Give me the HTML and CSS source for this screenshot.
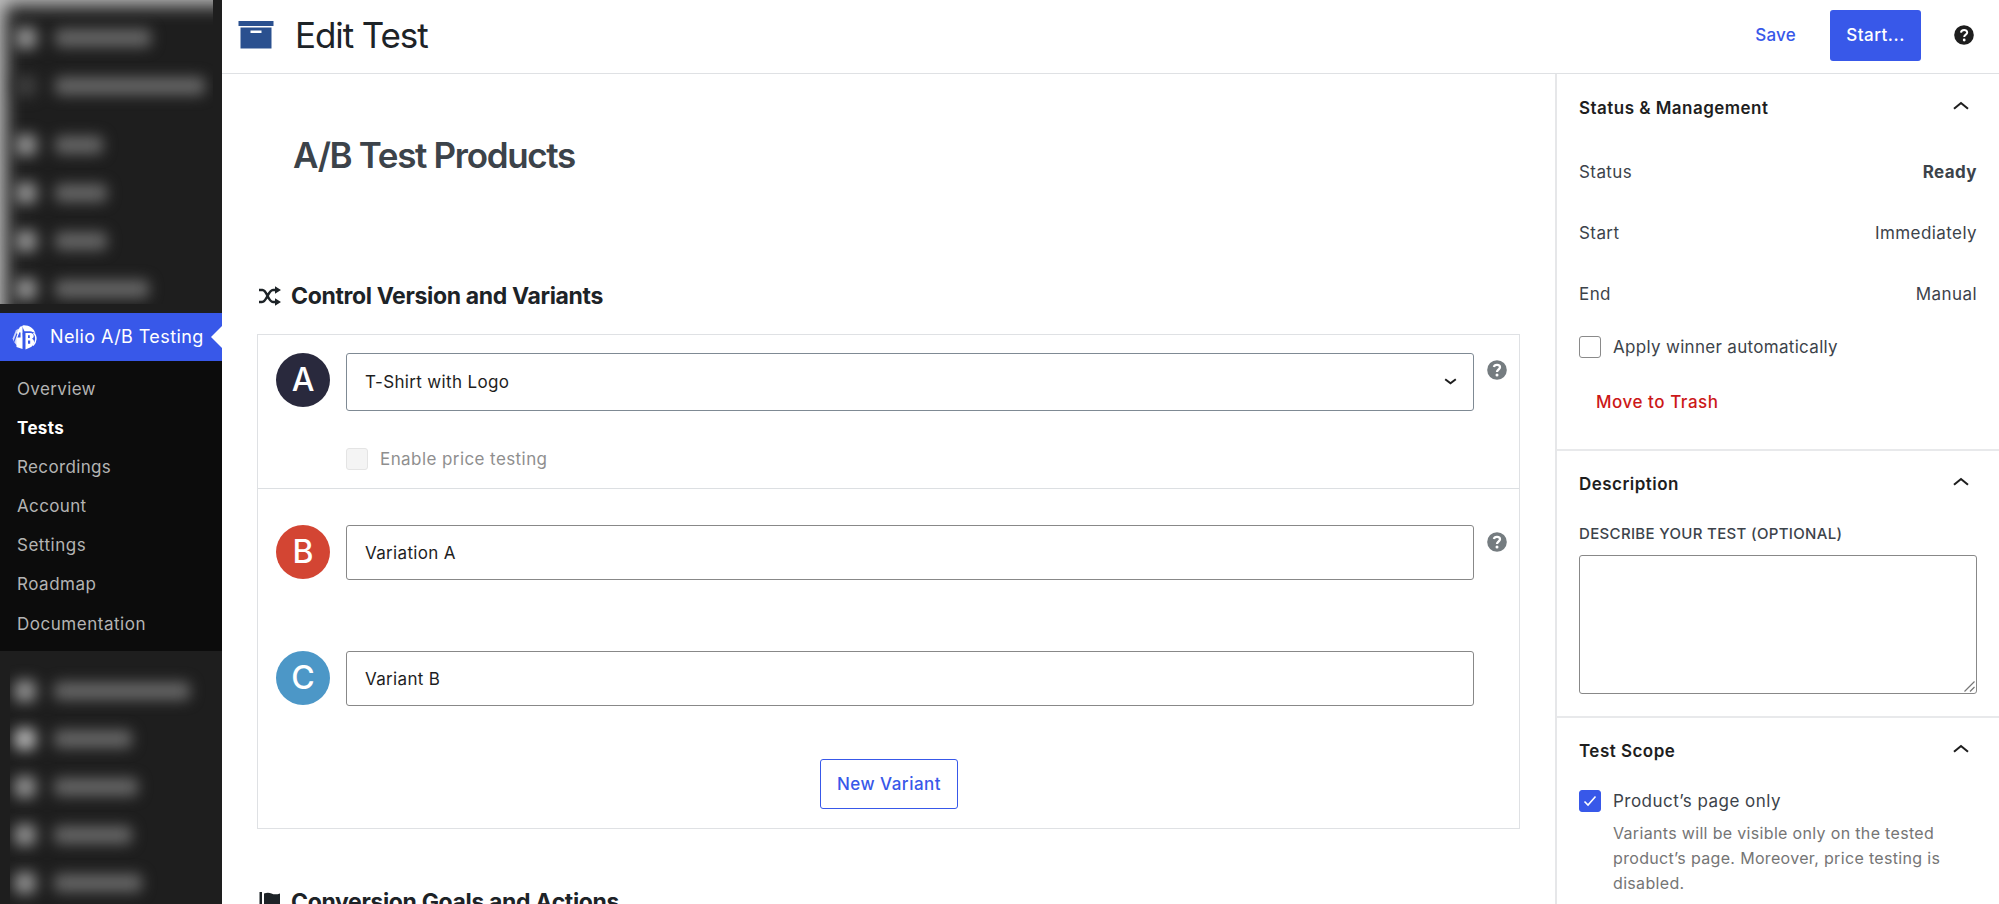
FILE: index.html
```html
<!DOCTYPE html>
<html lang="en">
<head>
<meta charset="utf-8">
<title>Edit Test</title>
<link rel="stylesheet" href="styles.css">
</head>
<body>
<div class="app">
  <nav class="menu">
    <div class="blurred top">
      <div class="haze"></div>
      <div class="ghost"><i></i><b style="width:96px"></b></div>
      <div class="ghost faint"><i></i><b style="width:150px"></b></div>
      <div class="ghost group"><i></i><b style="width:48px"></b></div>
      <div class="ghost"><i></i><b style="width:52px"></b></div>
      <div class="ghost"><i></i><b style="width:52px"></b></div>
      <div class="ghost"><i></i><b style="width:94px"></b></div>
    </div>
    <a class="current">
      <svg class="logo" width="25" height="25" viewBox="0 0 25 25"><g fill="#fff"><path d="M9.500 4.200L6.600 21.500C3.700 19.500 1.200 17 .6 13.500L3.800 5.500C5.200 4 7.500 3.300 9.500 4.200z" opacity=".75"/><path d="M4.500 9L8 1.800L10.500 1V24L4.500 22V14.500z"/><path d="M11 .4C17 0 22 3.500 23.500 8.500C21 6.500 19 6.300 12.500 6.300L10 1z"/><path d="M13.500 8H18.500C22.800 8.300 22.300 13 20 13.800C23.500 15.200 22.500 20.800 18 22.500L13.500 24.500z"/></g><path d="M21.500 8C25 11 24.500 17 21 20.500" fill="none" stroke="#fff" stroke-width="1.500"/><path d="M5 8.500L1.800 17M8 7.500V12H6.200zM11.200 8L12.400 24.500" fill="#3858e9" stroke="#3858e9" stroke-width="1.100"/><path d="M16 10.300H17.800V13H16zM16 15.500H18.200V18.700H16z" fill="#3858e9"/></svg>
      <span>Nelio A/B Testing</span>
    </a>
    <div class="submenu">
      <a>Overview</a><a class="on">Tests</a><a>Recordings</a><a>Account</a><a class="wide">Settings</a><a class="wide">Roadmap</a><a class="wide">Documentation</a>
    </div>
    <div class="blurred bottom">
      <div class="ghost"><i></i><b style="width:136px"></b></div>
      <div class="ghost bright"><i></i><b style="width:78px"></b></div>
      <div class="ghost"><i></i><b style="width:84px"></b></div>
      <div class="ghost"><i></i><b style="width:78px"></b></div>
      <div class="ghost"><i></i><b style="width:88px"></b></div>
    </div>
  </nav>
  <div class="page">
    <header class="bar">
      <svg width="36" height="28" viewBox="0 0 36 28"><path d="M.5 0H35.500V5H.5z" fill="#2a508f"/><path d="M2.500 6.500H33.500V27.500H2.500z" fill="#2a508f"/><path d="M12.500 9.500H23.500V12H12.500z" fill="#fff"/></svg>
      <h1>Edit Test</h1>
      <button class="save">Save</button>
      <button class="start">Start...</button>
      <svg class="help" width="20" height="20" viewBox="0 0 20 20"><circle cx="10" cy="10" r="9.800" fill="#1e1e1e"/><path d="M7 7.600C7.200 4.200 13.200 4.200 13.200 7.500C13.200 9.700 10.200 9.500 10.200 12" fill="none" stroke="#fff" stroke-width="2"/><circle cx="10.200" cy="15" r="1.400" fill="#fff"/></svg>
    </header>
    <div class="body">
      <main class="editor">
        <h2 class="title">A/B Test Products</h2>
        <h3 class="section"><svg width="22" height="20" viewBox="0 0 22 20"><path d="M0 4H3.500C8 4 9 16 14 16H17M0 16H3C8 16 9 4 14 4H17" fill="none" stroke="#1d2327" stroke-width="2.500"/><path d="M16 .3L22 4L16 7.700zM16 12.300L22 16L16 19.700z" fill="#1d2327"/></svg><span>Control Version and Variants</span></h3>
        <div class="panel">
          <div class="control">
            <div class="row">
              <div class="letter a">A</div>
              <div class="field select"><span>T-Shirt with Logo</span><svg width="13" height="8" viewBox="0 0 13 8"><path d="M1.200 1.300L6.500 5.300L11.800 1.300" fill="none" stroke="#1e1e1e" stroke-width="2"/></svg></div>
              <svg class="tip" width="20" height="20" viewBox="0 0 20 20"><circle cx="10" cy="10" r="9.800" fill="#757c80"/><path d="M6.900 7C7.500 4 13 4.200 13 7.300C13 9.500 10 9.500 10 12" fill="none" stroke="#fff" stroke-width="2.300"/><circle cx="10" cy="15" r="1.500" fill="#fff"/></svg>
            </div>
            <label class="check disabled"><span class="box"></span>Enable price testing</label>
          </div>
          <div class="variants">
            <div class="row">
              <div class="letter b">B</div>
              <div class="field">Variation A</div>
              <svg class="tip" width="20" height="20" viewBox="0 0 20 20"><circle cx="10" cy="10" r="9.800" fill="#757c80"/><path d="M6.900 7C7.500 4 13 4.200 13 7.300C13 9.500 10 9.500 10 12" fill="none" stroke="#fff" stroke-width="2.300"/><circle cx="10" cy="15" r="1.500" fill="#fff"/></svg>
            </div>
            <div class="row">
              <div class="letter c">C</div>
              <div class="field">Variant B</div>
            </div>
            <button class="new">New Variant</button>
          </div>
        </div>
        <h3 class="section goals"><svg width="22" height="22" viewBox="0 0 22 22"><path d="M.5 1H3V22H.5zM5 2.500Q9 .8 12.500 2.500T21 2.500V15Q16.500 17 12.500 15T5 15z" fill="#1d2327"/></svg><span>Conversion Goals and Actions</span></h3>
      </main>
      <aside class="settings">
        <section class="s-status">
          <h4>Status &amp; Management<svg class="chev" width="16" height="9" viewBox="0 0 16 9"><path d="M1 7.800L8 2L15 7.800" fill="none" stroke="#1e1e1e" stroke-width="2.100"/></svg></h4>
          <div class="pair first"><span>Status</span><strong>Ready</strong></div>
          <div class="pair"><span>Start</span><span>Immediately</span></div>
          <div class="pair"><span>End</span><span>Manual</span></div>
          <label class="check auto"><span class="box"></span>Apply winner automatically</label>
          <a class="trash">Move to Trash</a>
        </section>
        <section class="s-desc">
          <h4>Description<svg class="chev" width="16" height="9" viewBox="0 0 16 9"><path d="M1 7.800L8 2L15 7.800" fill="none" stroke="#1e1e1e" stroke-width="2.100"/></svg></h4>
          <div class="caption">DESCRIBE YOUR TEST (OPTIONAL)</div>
          <div class="textarea"><svg width="11" height="11" viewBox="0 0 11 11"><path d="M.5 10.500L10.500 .5M6 10.500L10.500 6" fill="none" stroke="#777" stroke-width="1.200"/></svg></div>
        </section>
        <section class="s-scope">
          <h4>Test Scope<svg class="chev" width="16" height="9" viewBox="0 0 16 9"><path d="M1 7.800L8 2L15 7.800" fill="none" stroke="#1e1e1e" stroke-width="2.100"/></svg></h4>
          <label class="check scope"><span class="box checked"><svg width="14" height="12" viewBox="0 0 14 12"><path d="M1.500 6.500L5 10L12.500 1.500" fill="none" stroke="#fff" stroke-width="1.600"/></svg></span>Product’s page only</label>
          <p>Variants will be visible only on the tested product’s page. Moreover, price testing is disabled.</p>
        </section>
      </aside>
    </div>
  </div>
</div>
</body>
</html>
```
FILE: styles.css
```css
* { box-sizing: border-box; margin: 0; }
body { font: 400 17px/24px Inter, "Liberation Sans", sans-serif; letter-spacing: .42px; color: #1e1e1e; background: #fff; }
svg { flex: none; display: block; }
button { font: inherit; letter-spacing: inherit; border: 0; padding: 0; background: none; white-space: nowrap; }
.app { display: flex; width: 1999px; height: 904px; overflow: hidden; }

/* Admin menu */
.menu { width: 222px; flex: none; background: #1e1e1e; display: flex; flex-direction: column; }
.blurred { overflow: hidden; flex: none; display: flex; flex-direction: column; gap: 28px; }
.blurred.top { position: relative; width: 213px; height: 304px; margin-bottom: 9px; padding: 28px 0 0 15px; }
.haze { position: absolute; left: 0; top: 0; width: 280px; height: 370px; box-shadow: inset 0 0 18px 5px #c6c6c6; }
.ghost { display: flex; align-items: center; gap: 18px; height: 20px; flex: none; filter: blur(7px); }
.ghost i { width: 22px; height: 22px; border-radius: 6px; background: #8c8c8c; flex: none; }
.ghost b { height: 18px; border-radius: 5px; background: #666; }
.ghost.group { margin-top: 11px; }
.ghost.faint i { background: #3c3c3c; }
.ghost.bright i { background: #b0b0b0; }
.blurred.bottom { margin-left: 10px; width: 212px; padding: 30px 0 0 4px; height: 253px; }
.current { height: 48px; flex: none; background: #3858e9; color: #fff; display: flex; align-items: center; padding-left: 12px; gap: 13px; font-size: 18px; letter-spacing: .4px; position: relative; white-space: nowrap; }
.current::after { content: ""; position: absolute; right: 0; top: 13px; border: 11px solid transparent; border-right-color: #fff; border-left: 0; }
.submenu { height: 290px; flex: none; background: #0c0c0c; padding: 9px 0 0 17px; display: flex; flex-direction: column; color: #b4b4b4; letter-spacing: .36px; }
.submenu a { height: 39.100px; line-height: 39px; }
.submenu .wide { letter-spacing: .52px; }
.submenu .on { color: #fff; font-weight: 700; }

/* Top bar */
.page { flex: 1; min-width: 0; }
.bar { height: 74px; border-bottom: 1px solid #dfe1e4; display: flex; align-items: center; padding: 0 25px 3px 16px; }
h1 { font-size: 35px; line-height: 44px; font-weight: 400; letter-spacing: -1.100px; margin-left: 21px; margin-right: auto; color: #1d2327; }
.save { color: #3858e9; font-weight: 500; letter-spacing: .25px; margin-right: 34px; }
.start { width: 91px; height: 51px; background: #3858e9; color: #fff; border-radius: 3px; font-weight: 500; letter-spacing: .5px; margin-right: 33px; }

/* Editor */
.body { display: flex; height: 830px; }
.editor { width: 1333px; flex: none; padding: 0 36px 0 35px; display: flex; flex-direction: column; }
.title { font-size: 35px; line-height: 44px; font-weight: 600; letter-spacing: -1.330px; color: #3c434a; margin: 59px 0 0 36px; height: 44px; flex: none; }
.section { display: flex; align-items: center; gap: 10px; height: 30px; flex: none; margin: 104px 0 0 2px; font-size: 23px; font-weight: 700; letter-spacing: -.345px; color: #1d2327; }
.panel { margin-top: 23px; width: 1263px; height: 495px; flex: none; border: 1px solid #dfe1e4; }
.control { height: 154px; border-bottom: 1px solid #dcdfe2; padding: 18px 0 0 18px; }
.row { display: flex; align-items: flex-start; }
.letter { width: 54px; height: 54px; border-radius: 50%; color: #fff; font-size: 32px; font-weight: 500; letter-spacing: 0; line-height: 54px; text-align: center; }
.a { background: #29293d; } .b { background: #d34533; } .c { background: #4c97c7; }
.field { margin-left: 16px; width: 1128px; height: 55px; border: 1px solid #888; border-radius: 3px; display: flex; align-items: center; padding-left: 18px; letter-spacing: .34px; }
.select { height: 58px; justify-content: space-between; padding-right: 16px; border-color: #7f8a94; }
.tip { margin: 7px 0 0 13px; }
.check { display: flex; align-items: center; gap: 12px; height: 22px; color: #3c434a; }
.box { width: 22px; height: 22px; border: 1px solid #8a8a8a; border-radius: 3px; flex: none; }
.checked { background: #3858e9; border-color: #3858e9; display: grid; place-content: center; }
.disabled { margin: 37px 0 0 70px; color: #8f8f8f; }
.disabled .box { background: #f4f4f4; border-color: #e4e4e4; }
.variants { padding: 36px 0 0 18px; }
.variants .row { height: 126px; }
.new { display: block; width: 138px; height: 50px; margin: -18px 0 0 544px; border: 1px solid #3858e9; border-radius: 3px; color: #3858e9; font-weight: 500; letter-spacing: .5px; }
.goals { margin-top: 58px; }

/* Settings column */
.settings { flex: 1; border-left: 2px solid #e6e7e9; color: #3c434a; }
.settings section { padding: 0 22px; border-bottom: 2px solid #e8e9eb; }
h4 { font-size: 17px; font-weight: 600; line-height: 24px; color: #1e1e1e; display: flex; justify-content: space-between; letter-spacing: .47px; }
.chev { margin: 5px 8px 0 0; }
.s-status { height: 377px; padding-top: 22px !important; }
.pair { display: flex; justify-content: space-between; height: 24px; margin-top: 37px; }
.pair.first { margin-top: 40px; }
.auto { margin-top: 30px; letter-spacing: .31px; }
.trash { display: block; color: #cc1818; font-weight: 500; letter-spacing: .54px; margin: 32px 0 0 17px; }
.s-desc { height: 267px; padding-top: 21px !important; }
.caption { font-size: 15px; font-weight: 500; letter-spacing: .33px; margin-top: 26px; line-height: 24px; }
.textarea { margin-top: 9px; height: 139px; border: 1px solid #888; border-radius: 3px; display: flex; align-items: flex-end; justify-content: flex-end; padding: 1px; }
.s-scope { padding-top: 21px !important; height: 300px; }
.scope { margin-top: 27px; letter-spacing: .47px; }
.s-scope p { font-size: 16px; line-height: 25px; letter-spacing: .33px; color: #757575; margin: 9px 0 0 34px; width: 335px; }
```
